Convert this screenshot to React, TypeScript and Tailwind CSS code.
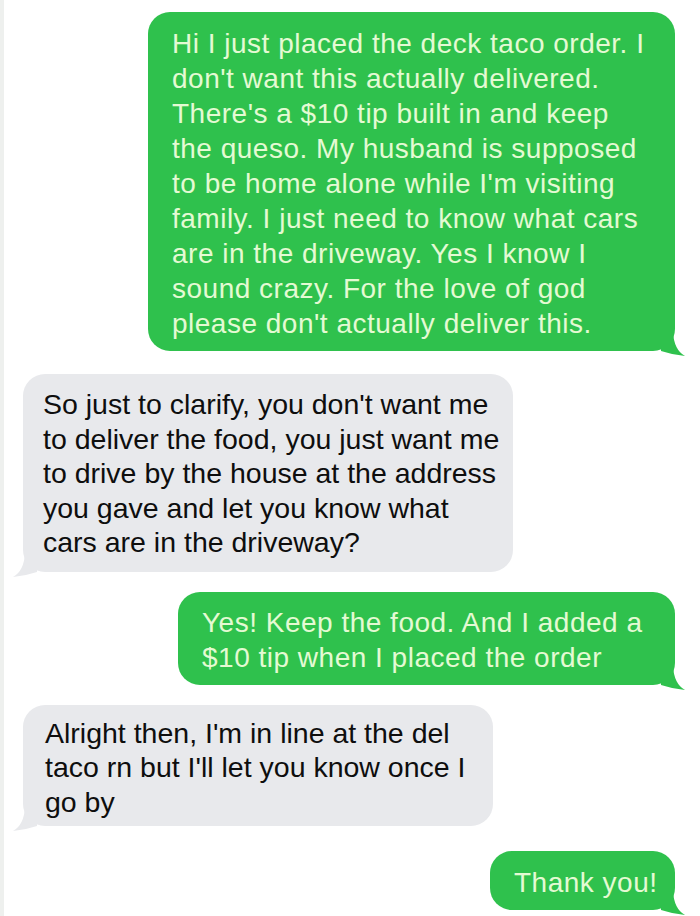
import React from "react"

type Msg = {
  from: "me" | "them"
  lines: string[]
  box: string
}

const messages: Msg[] = [
  {
    from: "me",
    box: "w-[527px] mt-[12px] pt-[14px] pb-[10px] pl-[24px]",
    lines: [
      "Hi I just placed the deck taco order. I",
      "don't want this actually delivered.",
      "There's a $10 tip built in and keep",
      "the queso. My husband is supposed",
      "to be home alone while I'm visiting",
      "family. I just need to know what cars",
      "are in the driveway. Yes I know I",
      "sound crazy. For the love of god",
      "please don't actually deliver this.",
    ],
  },
  {
    from: "them",
    box: "w-[490px] mt-[23px] pt-[13px] pb-[12px] pl-[20px]",
    lines: [
      "So just to clarify, you don't want me",
      "to deliver the food, you just want me",
      "to drive by the house at the address",
      "you gave and let you know what",
      "cars are in the driveway?",
    ],
  },
  {
    from: "me",
    box: "w-[497px] mt-[20px] pt-[13px] pb-[10px] pl-[24px]",
    lines: ["Yes! Keep the food. And I added a", "$10 tip when I placed the order"],
  },
  {
    from: "them",
    box: "w-[470px] mt-[20px] pt-[11px] pb-[7px] pl-[22px]",
    lines: ["Alright then, I'm in line at the del", "taco rn but I'll let you know once I", "go by"],
  },
  {
    from: "me",
    box: "w-[185px] mt-[25px] pt-[14px] pb-[10px] pl-[24px]",
    lines: ["Thank you!"],
  },
]

function Tail({ side, color }: { side: "left" | "right"; color: string }) {
  if (side === "right") {
    return (
      <svg className="absolute right-[-10px] bottom-[-5px]" width="24" height="24" viewBox="0 0 24 24">
        <path d="M12 0 Q13 18 24 24 Q12 23 0 19 L0 0 Z" fill={color} />
      </svg>
    )
  }
  return (
    <svg className="absolute left-[-10px] bottom-[-5px]" width="24" height="24" viewBox="0 0 24 24">
      <path d="M12 0 Q11 18 0 24 Q12 23 24 19 L24 0 Z" fill={color} />
    </svg>
  )
}

function Bubble({ msg }: { msg: Msg }) {
  const mine = msg.from === "me"
  return (
    <div
      className={`relative rounded-[22px] ${msg.box} ${
        mine ? "self-end mr-[25px] bg-[#2fc14d] text-[#e4fad3]" : "self-start ml-[19px] bg-[#e8e9ec] text-[#0e0e0e]"
      }`}
    >
      <div
        className={`whitespace-nowrap ${
          mine ? "text-[28px] leading-[35px] tracking-[0.5px]" : "text-[28.5px] leading-[34.5px]"
        }`}
      >
        {msg.lines.map((line, i) => (
          <div key={i}>{line}</div>
        ))}
      </div>
      <Tail side={mine ? "right" : "left"} color={mine ? "#2fc14d" : "#e8e9ec"} />
    </div>
  )
}

export default function App() {
  return (
    <div className="w-[700px] h-[916px] overflow-hidden bg-white font-['Liberation_Sans',Arial,sans-serif] flex flex-col border-l-[4px] border-[#eef0ee]">
      {messages.map((m, i) => (
        <Bubble key={i} msg={m} />
      ))}
    </div>
  )
}
